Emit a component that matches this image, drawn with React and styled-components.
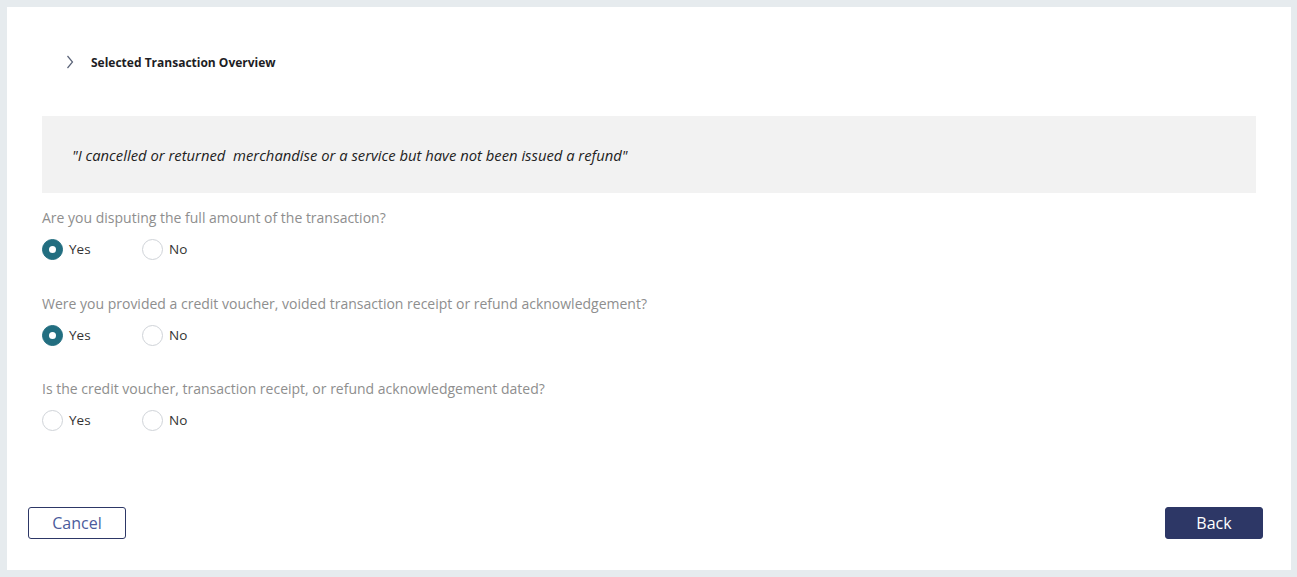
import React, { useState } from "react";
import styled, { createGlobalStyle } from "styled-components";

const Global = createGlobalStyle`
  html, body { margin: 0; padding: 0; }
  body {
    background: #e6ebee;
    font-family: "Open Sans", "Noto Sans", sans-serif;
  }
  * { box-sizing: border-box; }
`;

const Page = styled.div`
  padding: 7px 6px 7px 7px;
  height: 577px;
`;

const Card = styled.div`
  background: #ffffff;
  height: 563px;
  display: flex;
  flex-direction: column;
  padding: 45px 35px 31px 35px;
`;

const Header = styled.button`
  display: flex;
  align-items: center;
  gap: 17px;
  height: 20px;
  padding: 0 0 0 24px;
  border: none;
  background: transparent;
  cursor: pointer;
  align-self: flex-start;
`;

const Title = styled.span`
  font-family: "Open Sans", sans-serif;
  font-weight: 700;
  font-size: 12px;
  color: #1d1d24;
`;

const Quote = styled.div`
  margin-top: 44px;
  height: 77px;
  background: #f2f2f2;
  display: flex;
  align-items: center;
  padding: 0 30px;
  font-style: italic;
  font-size: 14.8px;
  color: #222222;
  white-space: pre;
`;

const Question = styled.div`
  margin-top: ${(p) => p.$gap}px;
  font-size: 14px;
  line-height: 18px;
  color: #8e8e8e;
`;

const Options = styled.div`
  margin-top: 12px;
  display: flex;
  height: 20px;
`;

const Option = styled.label`
  display: flex;
  align-items: center;
  gap: 6px;
  width: 100px;
  font-size: 13.5px;
  color: #333333;
  cursor: pointer;
`;

const Circle = styled.span`
  width: 21px;
  height: 21px;
  border-radius: 50%;
  flex: none;
  display: flex;
  align-items: center;
  justify-content: center;
  background: ${(p) => (p.$on ? "#226e80" : "#ffffff")};
  border: 1px solid ${(p) => (p.$on ? "#226e80" : "#cfd3d8")};
  &::after {
    content: "";
    width: 7px;
    height: 7px;
    border-radius: 50%;
    background: #ffffff;
    display: ${(p) => (p.$on ? "block" : "none")};
  }
`;

const Footer = styled.div`
  margin-top: auto;
  margin-left: -14px;
  margin-right: -7px;
  display: flex;
  justify-content: space-between;
`;

const Btn = styled.button`
  width: 98px;
  height: 32px;
  border-radius: 3px;
  font-family: "Open Sans", sans-serif;
  font-size: 16px;
  border: 1px solid #2d3766;
  background: ${(p) => (p.$primary ? "#2d3766" : "#ffffff")};
  color: ${(p) => (p.$primary ? "#ffffff" : "#4b5b9c")};
  cursor: pointer;
  padding: 0;
`;

const Chevron = () => (
  <svg width="8" height="14" viewBox="0 0 8 14">
    <path d="M1.5 1 L6.5 7 L1.5 13" fill="none" stroke="#5a6378" strokeWidth="1.2" />
  </svg>
);

const questions = [
  { q: "Are you disputing the full amount of the transaction?", v: "Yes", gap: 16 },
  { q: "Were you provided a credit voucher, voided transaction receipt or refund acknowledgement?", v: "Yes", gap: 36 },
  { q: "Is the credit voucher, transaction receipt, or refund acknowledgement dated?", v: null, gap: 35 },
];

export default function App() {
  const [vals, setVals] = useState(questions.map((q) => q.v));
  return (
    <>
      <Global />
      <Page>
        <Card>
          <Header>
            <Chevron />
            <Title>Selected Transaction Overview</Title>
          </Header>
          <Quote>"I cancelled or returned  merchandise or a service but have not been issued a refund"</Quote>
          {questions.map((item, i) => (
            <React.Fragment key={i}>
              <Question $gap={item.gap}>{item.q}</Question>
              <Options>
                {["Yes", "No"].map((o) => (
                  <Option
                    key={o}
                    onClick={() => setVals(vals.map((v, j) => (j === i ? o : v)))}
                  >
                    <Circle $on={vals[i] === o} />
                    {o}
                  </Option>
                ))}
              </Options>
            </React.Fragment>
          ))}
          <Footer>
            <Btn>Cancel</Btn>
            <Btn $primary>Back</Btn>
          </Footer>
        </Card>
      </Page>
    </>
  );
}
